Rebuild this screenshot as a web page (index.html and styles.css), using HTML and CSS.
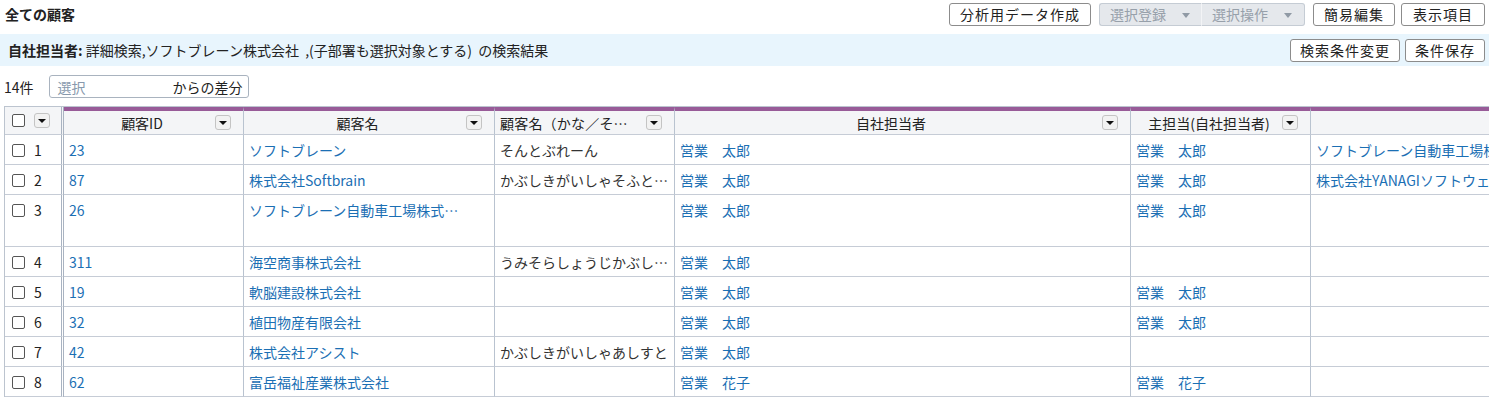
FILE: index.html
```html
<!DOCTYPE html>
<html lang="ja">
<head>
    <meta charset="UTF-8">
    <title>全ての顧客</title>
    <link rel="stylesheet" href="styles.css">
</head>
<body>
    <div class="page-head">
        <h1>全ての顧客</h1>
        <div class="actions">
            <button class="btn">分析用データ作成</button>
            <div class="btn-group">
                <button class="btn disabled">選択登録<span class="caret"></span></button>
                <button class="btn disabled">選択操作<span class="caret"></span></button>
            </div>
            <button class="btn">簡易編集</button>
            <button class="btn last">表示項目</button>
        </div>
    </div>

    <div class="search-bar">
        <p><b>自社担当者:</b> 詳細検索,ソフトブレーン株式会社 &nbsp;,(子部署も選択対象とする) &nbsp;の検索結果</p>
        <div class="actions">
            <button class="btn">検索条件変更</button>
            <button class="btn">条件保存</button>
        </div>
    </div>

    <div class="count-row">
        <span class="count">14件</span>
        <div class="diff-box">
            <span class="placeholder">選択</span>
            <span>からの差分</span>
        </div>
    </div>

    <div class="table-wrap">
        <table class="grid">
            <colgroup>
                <col style="width: 59px">
                <col style="width: 180px">
                <col style="width: 251px">
                <col style="width: 180px">
                <col style="width: 456px">
                <col style="width: 180px">
                <col style="width: 220px">
            </colgroup>
            <thead>
                <tr>
                    <th class="sel-col"><div class="sel"><span class="check"></span><span class="menu-btn"></span></div></th>
                    <th><div class="th-in"><span class="th-label">顧客ID</span><span class="menu-btn"></span></div></th>
                    <th><div class="th-in"><span class="th-label">顧客名</span><span class="menu-btn"></span></div></th>
                    <th><div class="th-in"><span class="th-label left">顧客名（かな／そ…</span><span class="menu-btn"></span></div></th>
                    <th><div class="th-in"><span class="th-label">自社担当者</span><span class="menu-btn"></span></div></th>
                    <th><div class="th-in"><span class="th-label">主担当(自社担当者)</span><span class="menu-btn"></span></div></th>
                    <th></th>
                </tr>
            </thead>
            <tbody>
                <tr>
                    <td class="sel-col"><div class="sel"><span class="check"></span>1</div></td>
                    <td><a>23</a></td>
                    <td><a>ソフトブレーン</a></td>
                    <td>そんとぶれーん</td>
                    <td><a>営業　太郎</a></td>
                    <td><a>営業　太郎</a></td>
                    <td><a>ソフトブレーン自動車工場株式会社</a></td>
                </tr>
                <tr>
                    <td class="sel-col"><div class="sel"><span class="check"></span>2</div></td>
                    <td><a>87</a></td>
                    <td><a>株式会社Softbrain</a></td>
                    <td>かぶしきがいしゃそふと…</td>
                    <td><a>営業　太郎</a></td>
                    <td><a>営業　太郎</a></td>
                    <td><a>株式会社YANAGIソフトウェア</a></td>
                </tr>
                <tr class="tall">
                    <td class="sel-col"><div class="sel"><span class="check"></span>3</div></td>
                    <td><a>26</a></td>
                    <td><a>ソフトブレーン自動車工場株式…</a></td>
                    <td></td>
                    <td><a>営業　太郎</a></td>
                    <td><a>営業　太郎</a></td>
                    <td></td>
                </tr>
                <tr>
                    <td class="sel-col"><div class="sel"><span class="check"></span>4</div></td>
                    <td><a>311</a></td>
                    <td><a>海空商事株式会社</a></td>
                    <td>うみそらしょうじかぶし…</td>
                    <td><a>営業　太郎</a></td>
                    <td></td>
                    <td></td>
                </tr>
                <tr>
                    <td class="sel-col"><div class="sel"><span class="check"></span>5</div></td>
                    <td><a>19</a></td>
                    <td><a>軟脳建設株式会社</a></td>
                    <td></td>
                    <td><a>営業　太郎</a></td>
                    <td><a>営業　太郎</a></td>
                    <td></td>
                </tr>
                <tr>
                    <td class="sel-col"><div class="sel"><span class="check"></span>6</div></td>
                    <td><a>32</a></td>
                    <td><a>植田物産有限会社</a></td>
                    <td></td>
                    <td><a>営業　太郎</a></td>
                    <td><a>営業　太郎</a></td>
                    <td></td>
                </tr>
                <tr>
                    <td class="sel-col"><div class="sel"><span class="check"></span>7</div></td>
                    <td><a>42</a></td>
                    <td><a>株式会社アシスト</a></td>
                    <td>かぶしきがいしゃあしすと</td>
                    <td><a>営業　太郎</a></td>
                    <td></td>
                    <td></td>
                </tr>
                <tr>
                    <td class="sel-col"><div class="sel"><span class="check"></span>8</div></td>
                    <td><a>62</a></td>
                    <td><a>富岳福祉産業株式会社</a></td>
                    <td></td>
                    <td><a>営業　花子</a></td>
                    <td><a>営業　花子</a></td>
                    <td></td>
                </tr>
            </tbody>
        </table>
    </div>
</body>
</html>
```

FILE: styles.css
```css
* {
    margin: 0;
    padding: 0;
    box-sizing: border-box;
}

body {
    font-family: "Noto Sans CJK JP", "Noto Sans", sans-serif;
    font-size: 14px;
    color: #333;
    background: #fff;
    padding: 0 4px;
    overflow: hidden;
    width: 1489px;
}

.page-head {
    display: flex;
    justify-content: space-between;
    align-items: flex-start;
    height: 34px;
    padding-top: 3px;
}

.page-head h1 {
    font-size: 14px;
    font-weight: bold;
    line-height: 22px;
    padding-left: 1px;
    color: #222;
}

.actions {
    display: flex;
    gap: 8px;
}

.btn {
    font-family: inherit;
    font-size: 14px;
    color: #222;
    background: #fff;
    border: 1px solid #8c8c8c;
    border-radius: 3px;
    height: 23px;
    line-height: 21px;
    padding: 0 9px;
    letter-spacing: 1px;
}

.page-head .btn {
    padding: 0 10px;
}

.page-head .btn.last {
    margin-left: -2px;
    padding: 0 11px;
}

.btn-group {
    display: flex;
}

.page-head .btn.disabled {
    width: 103px;
    background: #e5e8ec;
    color: #97a0aa;
    border-color: #c5ccd4;
    padding: 0 0 0 10px;
    letter-spacing: 0;
    text-align: left;
}

.btn-group .btn:first-child {
    border-radius: 3px 0 0 3px;
    border-right: 1px solid #f3f4f6;
}

.btn-group .btn:last-child {
    border-radius: 0 3px 3px 0;
    border-left: none;
}

.caret {
    display: inline-block;
    width: 0;
    height: 0;
    border-left: 4px solid transparent;
    border-right: 4px solid transparent;
    border-top: 5px solid #909aa5;
    vertical-align: 2px;
    margin-left: 16px;
}

.search-bar {
    display: flex;
    justify-content: space-between;
    align-items: center;
    height: 32px;
    background: #e8f5fd;
    padding: 0 0 0 8px;
    margin-left: -4px;
    margin-right: -4px;
}

.search-bar p {
    font-size: 14px;
    color: #222;
    margin-top: -1px;
}

.search-bar .actions {
    gap: 5px;
    padding-right: 4px;
}

.count-row {
    display: flex;
    align-items: center;
    gap: 15px;
    margin-top: 9px;
    height: 23px;
}

.count {
    color: #222;
}

.diff-box {
    width: 200px;
    height: 23px;
    border: 1px solid #a9b3bf;
    border-radius: 3px;
    display: flex;
    justify-content: space-between;
    align-items: center;
    padding: 0 5px 0 8px;
    color: #222;
}

.placeholder {
    color: #8899ad;
}

.table-wrap {
    margin-top: 8px;
    width: 1500px;
}

.grid {
    table-layout: fixed;
    border-collapse: separate;
    border-spacing: 0;
    width: 1526px;
    border-top: 1px solid #bcc4cf;
    border-left: 1px solid #bcc4cf;
}

.grid th,
.grid td {
    border-right: 1px solid #b9c3d0;
    border-bottom: 1px solid #c6ccd6;
    text-align: left;
    white-space: nowrap;
    overflow: hidden;
}

.grid th {
    height: 28px;
    background: #f4f5f7;
    font-weight: normal;
    color: #222;
    border-top: 4px solid #985b98;
    padding: 0 12px 0 5px;
}

.grid th.sel-col {
    border-top: none;
    padding: 0 0 0 7px;
}

.grid .sel-col {
    border-right: 3px double #a9b3c1;
}

.grid td {
    height: 30px;
    vertical-align: top;
    padding: 5px 5px 0 5px;
    line-height: 20px;
}

.grid td.sel-col {
    padding: 5px 0 0 7px;
}

.grid tr.tall td {
    height: 52px;
}

.grid a {
    color: #1b6fb4;
}

.th-in {
    display: flex;
    align-items: center;
}

.th-label {
    flex: 1;
    text-align: center;
}

.th-label.left {
    text-align: left;
    letter-spacing: 0.2px;
}

.sel {
    display: flex;
    align-items: center;
    gap: 9px;
    color: #222;
}

.check {
    display: inline-block;
    width: 13px;
    height: 13px;
    border: 1px solid #555;
    border-radius: 2px;
    background: #fff;
}

.menu-btn {
    position: relative;
    display: inline-block;
    width: 16px;
    height: 15px;
    border: 1px solid #c4c4c4;
    border-radius: 3px;
    background: #f2f2f2;
    flex: none;
}

.menu-btn::after {
    content: "";
    position: absolute;
    left: 3px;
    top: 5px;
    border-left: 4px solid transparent;
    border-right: 4px solid transparent;
    border-top: 4px solid #111;
}
```
